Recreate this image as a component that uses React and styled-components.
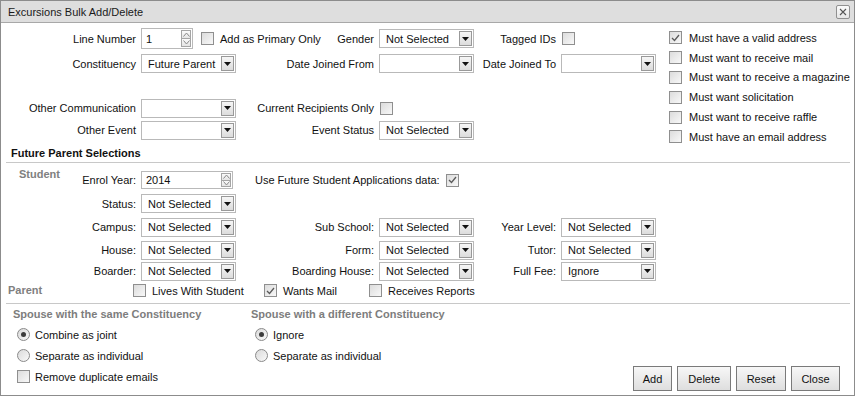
import React from 'react';
import styled, { createGlobalStyle } from 'styled-components';

const GlobalStyle = createGlobalStyle`
  html, body { margin: 0; padding: 0; background: #fff; }
  body {
    font-family: "Liberation Sans", Arial, sans-serif;
    font-size: 11px;
    color: #111;
  }
  * { box-sizing: border-box; }
`;

const Dialog = styled.div`
  width: 855px;
  height: 396px;
  border: 1px solid #8c8c8c;
  background: #fff;
  display: flex;
  flex-direction: column;
  overflow: hidden;
`;

const TitleBar = styled.div`
  flex: none;
  height: 22px;
  background: #dedede;
  border-bottom: 1px solid #a8a8a8;
  display: flex;
  align-items: center;
  justify-content: space-between;
  padding: 0 4px 0 7px;
  color: #1a1a1a;
`;

const CloseBox = styled.span`
  width: 14px;
  height: 14px;
  border: 1px solid #909090;
  border-radius: 2px;
  background: linear-gradient(#fafafa, #e6e6e6);
  display: flex;
  align-items: center;
  justify-content: center;
`;

const TopSection = styled.div`
  display: flex;
  align-items: flex-start;
  flex: none;
`;

const FormGrid = styled.div`
  display: grid;
  grid-template-columns: ${p => p.$cols};
  grid-template-rows: ${p => p.$rows};
  column-gap: 5px;
  align-items: center;
  padding-top: ${p => p.$top}px;
  padding-left: 1px;
  flex: none;
`;

const FieldLabel = styled.span`
  text-align: right;
  white-space: nowrap;
`;

const Cell = styled.div`
  display: flex;
  align-items: center;
  white-space: nowrap;
  grid-column: ${p => p.$span || 'auto'};
  padding-left: ${p => p.$pad || 0}px;
`;

const RowGap = styled.div`
  grid-column: 1 / -1;
`;

const SelectBox = styled.div`
  flex: none;
  width: ${p => p.$width}px;
  height: 19px;
  border: 1px solid #b9b9b9;
  background: #fff;
  display: flex;
  align-items: center;
  padding: 1px 1px 1px 0;
`;

const SelectText = styled.span`
  flex: 1;
  padding-left: 6px;
  white-space: nowrap;
  overflow: hidden;
`;

const DropButton = styled.span`
  width: 13px;
  height: 15px;
  border: 1px solid #999;
  background: linear-gradient(#f6f6f6, #dcdcdc);
  display: flex;
  align-items: center;
  justify-content: center;
`;

const SpinBox = styled.div`
  flex: none;
  width: ${p => p.$width}px;
  height: ${p => p.$height}px;
  border: 1px solid #b9b9b9;
  background: #fff;
  display: flex;
  align-items: center;
  padding: 1px;
`;

const SpinText = styled.span`
  flex: 1;
  padding-left: 3px;
`;

const SpinButtons = styled.span`
  width: 10px;
  align-self: stretch;
  display: flex;
  flex-direction: column;
`;

const SpinButton = styled.span`
  flex: 1;
  border: 1px solid #a5a5a5;
  background: linear-gradient(#fbfbfb, #e4e4e4);
  display: flex;
  align-items: center;
  justify-content: center;
  & + & { border-top: none; }
`;

const CheckWrap = styled.span`
  flex: none;
  display: inline-flex;
  align-items: center;
  white-space: nowrap;
  gap: ${p => p.$gap}px;
  margin-left: ${p => p.$offset || 0}px;
`;

const Box = styled.span`
  width: 13px;
  height: 13px;
  flex: none;
  border: 1px solid #8f8f8f;
  background: linear-gradient(135deg, #dcdcdc, #f8f8f8);
  display: flex;
  align-items: center;
  justify-content: center;
`;

const RadioCircle = styled.span`
  width: 13px;
  height: 13px;
  flex: none;
  border: 1px solid #8a8a8a;
  border-radius: 50%;
  background: linear-gradient(135deg, #dadada, #f9f9f9);
  display: flex;
  align-items: center;
  justify-content: center;
`;

const Dot = styled.span`
  width: 5px;
  height: 5px;
  border-radius: 50%;
  background: #3c3c3c;
`;

const OptionList = styled.div`
  margin-left: 13px;
  margin-bottom: -8px;
  padding-top: 5px;
  display: flex;
  flex-direction: column;
`;

const OptionRow = styled.div`
  height: ${p => p.$h}px;
  display: flex;
  align-items: center;
  padding-left: ${p => p.$pad || 0}px;
`;

const SectionTitle = styled.div`
  flex: none;
  margin: 0 4px 0 5px;
  padding: 6px 0 2px 5px;
  line-height: 13px;
  font-weight: bold;
  border-bottom: 1px solid #c8c8c8;
`;

const SideLabel = styled.span`
  font-weight: bold;
  color: #808080;
  padding-left: ${p => p.$indent}px;
  align-self: ${p => p.$self || 'center'};
  line-height: 13px;
  white-space: nowrap;
`;

const ParentRow = styled.div`
  flex: none;
  height: 19px;
  display: flex;
  align-items: center;
`;

const ParentItem = styled.div`
  width: ${p => p.$width ? `${p.$width}px` : 'auto'};
  display: flex;
  align-items: center;
`;

const BottomSection = styled.div`
  flex: 1;
  display: flex;
  margin: 3px 4px 0 5px;
  border-top: 1px solid #c8c8c8;
`;

const OptionGroup = styled.div`
  width: ${p => p.$width ? `${p.$width}px` : 'auto'};
  padding-left: ${p => p.$pad}px;
  display: flex;
  flex-direction: column;
`;

const GroupTitle = styled.div`
  height: 20px;
  display: flex;
  align-items: center;
  font-weight: bold;
  color: #7d7d7d;
  white-space: nowrap;
`;

const ButtonBar = styled.div`
  margin-left: auto;
  margin-right: 10px;
  margin-bottom: 4px;
  align-self: flex-end;
  display: flex;
  gap: 5px;
`;

const ActionButton = styled.button`
  height: 25px;
  padding: 0 ${p => p.$pad}px;
  border: 1px solid #7a7a7a;
  border-radius: 0;
  background: linear-gradient(#f7f7f7, #dedede);
  font-family: inherit;
  font-size: 11px;
  color: #111;
`;

function Select({ value = '', width = 95 }) {
  return (
    <SelectBox $width={width}>
      <SelectText>{value}</SelectText>
      <DropButton>
        <svg width="7" height="4" viewBox="0 0 7 4"><path d="M0 0h7L3.5 4z" fill="#111" /></svg>
      </DropButton>
    </SelectBox>
  );
}

function Spin({ value, width, height }) {
  return (
    <SpinBox $width={width} $height={height}>
      <SpinText>{value}</SpinText>
      <SpinButtons>
        <SpinButton>
          <svg width="7" height="5" viewBox="0 0 7 5"><path d="M0.5 4.5L3.5 1L6.5 4.5" fill="none" stroke="#8a8a8a" /></svg>
        </SpinButton>
        <SpinButton>
          <svg width="7" height="5" viewBox="0 0 7 5"><path d="M0.5 0.5L3.5 4L6.5 0.5" fill="none" stroke="#8a8a8a" /></svg>
        </SpinButton>
      </SpinButtons>
    </SpinBox>
  );
}

function Check({ label, checked, gap = 6, offset }) {
  return (
    <CheckWrap $gap={gap} $offset={offset}>
      <Box>
        {checked && (
          <svg width="9" height="8" viewBox="0 0 9 8">
            <path d="M1 4L3.5 6.5L8 1" fill="none" stroke="#5a5a5a" strokeWidth="1.3" />
          </svg>
        )}
      </Box>
      {label && <span>{label}</span>}
    </CheckWrap>
  );
}

function Radio({ label, checked }) {
  return (
    <CheckWrap $gap={5}>
      <RadioCircle>{checked && <Dot />}</RadioCircle>
      <span>{label}</span>
    </CheckWrap>
  );
}

const mustHave = [
  ['Must have a valid address', true],
  ['Must want to receive mail', false],
  ['Must want to receive a magazine', false],
  ['Must want solicitation', false],
  ['Must want to receive raffle', false],
  ['Must have an email address', false],
];

const studentRows = [
  ['Campus:', 'Sub School:', 'Year Level:', 'Not Selected'],
  ['House:', 'Form:', 'Tutor:', 'Not Selected'],
  ['Boarder:', 'Boarding House:', 'Full Fee:', 'Ignore'],
];

export default function App() {
  return (
    <>
      <GlobalStyle />
      <Dialog>
        <TitleBar>
          <span>Excursions Bulk Add/Delete</span>
          <CloseBox>
            <svg width="8" height="8" viewBox="0 0 8 8">
              <path d="M1 1L7 7M7 1L1 7" stroke="#555" strokeWidth="1.1" />
            </svg>
          </CloseBox>
        </TitleBar>

        <TopSection>
          <FormGrid $cols="134px 95px 133px 95px 77px 95px" $rows="25px 25px 21px 22px 22px" $top={3}>
            <FieldLabel>Line Number</FieldLabel>
            <Cell>
              <Spin value="1" width={52} height={21} />
              <Check label="Add as Primary Only" offset={8} />
            </Cell>
            <FieldLabel>Gender</FieldLabel>
            <Select value="Not Selected" />
            <FieldLabel>Tagged IDs</FieldLabel>
            <Cell><Check offset={1} /></Cell>

            <FieldLabel>Constituency</FieldLabel>
            <Select value="Future Parent" />
            <FieldLabel>Date Joined From</FieldLabel>
            <Select />
            <FieldLabel>Date Joined To</FieldLabel>
            <Select />

            <RowGap />

            <FieldLabel>Other Communication</FieldLabel>
            <Select />
            <FieldLabel>Current Recipients Only</FieldLabel>
            <Cell><Check offset={1} /></Cell>
            <span />
            <span />

            <FieldLabel>Other Event</FieldLabel>
            <Select />
            <FieldLabel>Event Status</FieldLabel>
            <Select value="Not Selected" />
          </FormGrid>

          <OptionList>
            {mustHave.map(([label, checked]) => (
              <OptionRow key={label} $h={19.8}>
                <Check label={label} checked={checked} gap={7} />
              </OptionRow>
            ))}
          </OptionList>
        </TopSection>

        <SectionTitle>Future Parent Selections</SectionTitle>

        <FormGrid $cols="67px 62px 95px 133px 95px 77px 95px" $rows="24px 23px 24px 22px 20px" $top={5}>
          <SideLabel $indent={17} $self="start">Student</SideLabel>
          <FieldLabel>Enrol Year:</FieldLabel>
          <Spin value="2014" width={92} height={18} />
          <Cell $span="span 3" $pad={14}>
            Use Future Student Applications data:
            <Check checked offset={6} />
          </Cell>
          <span />

          <span />
          <FieldLabel>Status:</FieldLabel>
          <Select value="Not Selected" />
          <Cell $span="span 4" />

          {studentRows.map(([a, b, c, v]) => (
            <React.Fragment key={a}>
              <span />
              <FieldLabel>{a}</FieldLabel>
              <Select value="Not Selected" />
              <FieldLabel>{b}</FieldLabel>
              <Select value="Not Selected" />
              <FieldLabel>{c}</FieldLabel>
              <Select value={v} />
            </React.Fragment>
          ))}
        </FormGrid>

        <ParentRow>
          <ParentItem $width={132}>
            <SideLabel $indent={7}>Parent</SideLabel>
          </ParentItem>
          <ParentItem $width={131}><Check label="Lives With Student" /></ParentItem>
          <ParentItem $width={105}><Check label="Wants Mail" checked /></ParentItem>
          <ParentItem><Check label="Receives Reports" /></ParentItem>
        </ParentRow>

        <BottomSection>
          <OptionGroup $width={245} $pad={7}>
            <GroupTitle>Spouse with the same Constituency</GroupTitle>
            <OptionRow $h={21} $pad={4}><Radio label="Combine as joint" checked /></OptionRow>
            <OptionRow $h={21} $pad={4}><Radio label="Separate as individual" /></OptionRow>
            <OptionRow $h={21} $pad={4}><Check label="Remove duplicate emails" gap={5} /></OptionRow>
          </OptionGroup>
          <OptionGroup $pad={0}>
            <GroupTitle>Spouse with a different Constituency</GroupTitle>
            <OptionRow $h={21} $pad={4}><Radio label="Ignore" checked /></OptionRow>
            <OptionRow $h={21} $pad={4}><Radio label="Separate as individual" /></OptionRow>
          </OptionGroup>
          <ButtonBar>
            <ActionButton $pad={9}>Add</ActionButton>
            <ActionButton $pad={10}>Delete</ActionButton>
            <ActionButton $pad={9.5}>Reset</ActionButton>
            <ActionButton $pad={9.5}>Close</ActionButton>
          </ButtonBar>
        </BottomSection>
      </Dialog>
    </>
  );
}
